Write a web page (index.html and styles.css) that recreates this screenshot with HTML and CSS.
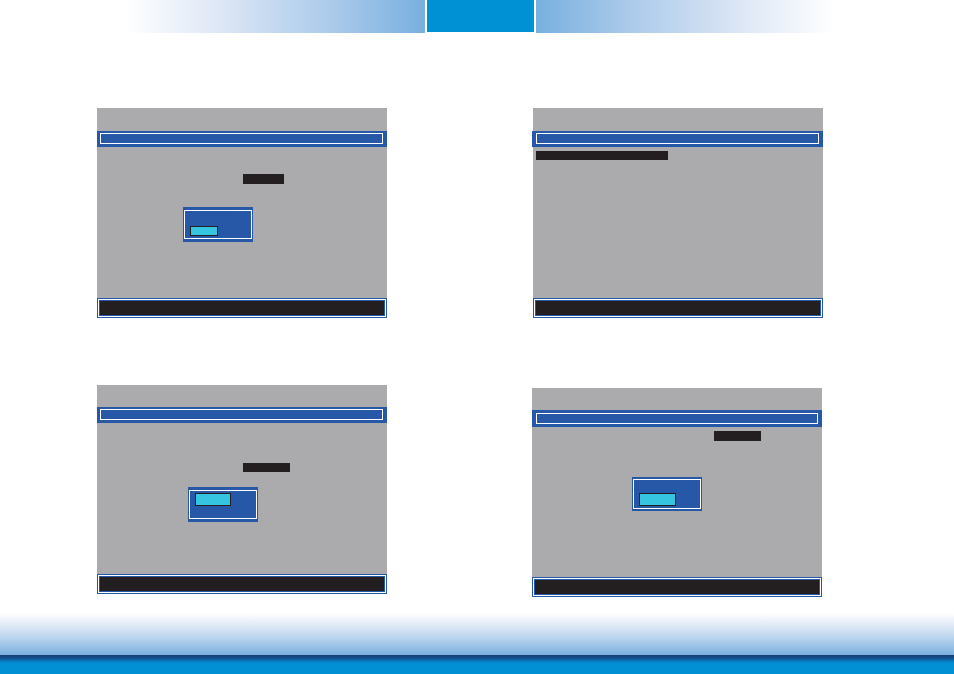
FILE: index.html
```html
<!DOCTYPE html>
<html lang="en">
<head>
<meta charset="utf-8">
<title>BIOS screens</title>
<link rel="stylesheet" href="styles.css">
</head>
<body>
<div class="page">
  <header class="header">
    <div class="hdr-left"></div>
    <div class="hdr-center"></div>
    <div class="hdr-right"></div>
  </header>
  <main class="screens">
    <section class="screen s1">
      <div class="top"></div>
      <div class="title"><div class="title-inner"></div></div>
      <div class="content">
        <div class="field f1"></div>
        <div class="dialog d1"><div class="dialog-inner"><div class="btn b1"></div></div></div>
      </div>
      <div class="status"><div class="status-frame"><div class="status-inner"></div></div></div>
    </section>
    <section class="screen s2">
      <div class="top"></div>
      <div class="title t2"><div class="title-inner"></div></div>
      <div class="content">
        <div class="field f2"></div>
      </div>
      <div class="status"><div class="status-frame"><div class="status-inner"></div></div></div>
    </section>
    <section class="screen s3">
      <div class="top top3"></div>
      <div class="title"><div class="title-inner"></div></div>
      <div class="content">
        <div class="field f3"></div>
        <div class="dialog d3"><div class="dialog-inner"><div class="btn b3"></div></div></div>
      </div>
      <div class="status"><div class="status-frame"><div class="status-inner"></div></div></div>
    </section>
    <section class="screen s4">
      <div class="top top3"></div>
      <div class="title t4"><div class="title-inner"></div></div>
      <div class="content">
        <div class="field f4"></div>
        <div class="dialog d4"><div class="dialog-inner"><div class="btn b4"></div></div></div>
      </div>
      <div class="status"><div class="status-frame"><div class="status-inner"></div></div></div>
    </section>
  </main>
  <footer class="footer">
    <div class="foot-fade"></div>
    <div class="foot-edge"></div>
    <div class="foot-band"></div>
  </footer>
</div>
</body>
</html>
```

FILE: styles.css
```css
* { box-sizing: border-box; }
html, body { margin: 0; padding: 0; background: #ffffff; }
body { font-family: "Liberation Sans", Arial, sans-serif; }

.page {
  width: 954px;
  height: 674px;
  display: flex;
  flex-direction: column;
  overflow: hidden;
}

/* header */
.header {
  height: 33px;
  flex: none;
  display: flex;
  align-items: flex-start;
  padding-left: 125px;
  gap: 2px;
}
.hdr-left {
  width: 300px;
  height: 33px;
  background: linear-gradient(to right, #ffffff 0%, #dfe8f6 30%, #a9c9ea 70%, #78b0df 100%);
}
.hdr-center {
  width: 107px;
  height: 32px;
  background: #0091d4;
}
.hdr-right {
  width: 300px;
  height: 33px;
  background: linear-gradient(to left, #ffffff 0%, #dfe8f6 30%, #a9c9ea 70%, #78b0df 100%);
}

/* screens grid */
.screens {
  flex: 1;
  display: grid;
  grid-template-columns: 290px 290px;
  grid-template-rows: 210px 212px;
  column-gap: 145px;
  row-gap: 67px;
  padding-left: 97px;
  padding-top: 75px;
  align-content: start;
}

.screen {
  display: flex;
  flex-direction: column;
  background: #abaaac;
  width: 290px;
}
.s2 { margin-left: 1px; }
.s3 { height: 209px; }
.s4 { height: 209px; margin-top: 3px; }

.top { height: 23px; flex: none; }
.top3 { height: 22px; }

.title {
  height: 16px;
  flex: none;
  background: #2658a7;
  padding: 2px 4px 3px 3px;
}
.t2 { margin-left: -1px; padding-left: 4px; padding-right: 4px; }
.t4 { height: 17px; padding: 3px 4px 3px 4px; }
.title-inner {
  height: 11px;
  border: 1px solid #ffffff;
}

.content {
  flex: 1;
  display: flex;
  flex-direction: column;
  align-items: flex-start;
}

.status {
  height: 20px;
  flex: none;
  background: #2658a7;
  padding: 1px;
}
.status-frame {
  height: 18px;
  border: 1px solid #ffffff;
  padding: 1px;
}
.status-inner {
  height: 14px;
  background: #231f20;
}

/* fields */
.field { background: #231f20; flex: none; }
.f1 { width: 41px; height: 10px; margin: 27px 0 0 146px; }
.f2 { width: 132px; height: 9px; margin: 4px 0 0 3px; }
.f3 { width: 47px; height: 9px; margin: 40px 0 0 146px; }
.f4 { width: 47px; height: 10px; margin: 4px 0 0 182px; }

/* dialogs */
.dialog {
  width: 70px;
  height: 35px;
  background: #2658a7;
  padding: 3px 1px;
  flex: none;
}
.d1 { margin: 23px 0 0 86px; }
.d3 { margin: 15px 0 0 91px; }
.d4 { height: 34px; padding: 2px 1px; margin: 36px 0 0 100px; }
.dialog-inner {
  height: 100%;
  border: 1px solid #ffffff;
  padding-left: 5px;
}
.btn {
  background: #36c5e0;
  border: 1px solid #231f20;
}
.b1 { width: 28px; height: 10px; margin-top: 15px; }
.b3 { width: 36px; height: 13px; margin-top: 2px; }
.b4 { width: 37px; height: 13px; margin-top: 13px; }

/* footer */
.footer {
  height: 61px;
  flex: none;
  display: flex;
  flex-direction: column;
}
.foot-fade {
  height: 42px;
  background: linear-gradient(to bottom, #ffffff 0%, #e6edf8 25%, #b9d3ee 60%, #7ab0df 100%);
}
.foot-edge {
  height: 8px;
  background: linear-gradient(to bottom, #1b3c70 0%, #14508d 40%, #0a78bb 75%, #0090d3 100%);
}
.foot-band {
  flex: 1;
  background: #0090d3;
}
```
